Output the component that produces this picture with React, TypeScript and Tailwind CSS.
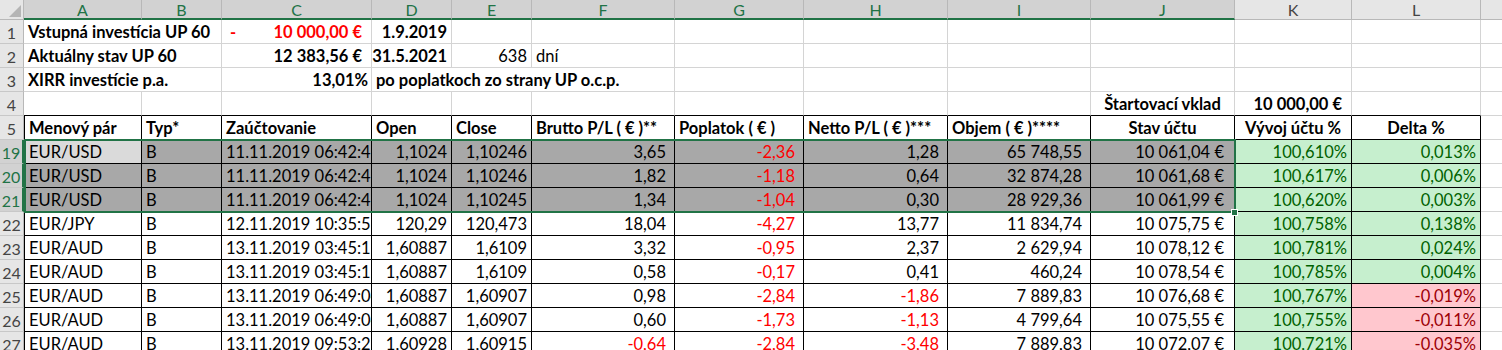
import React from 'react';

type Cell = {
  v?: React.ReactNode;
  a?: 'l' | 'r' | 'c';
  b?: boolean;
  c?: string;
  bg?: string;
  span?: number;
  pr?: string;
};

type Row = { n: number; kind: 'top' | 'r4' | 'table'; sel?: boolean; cells: Cell[] };

const COL_LETTERS = ['', 'A', 'B', 'C', 'D', 'E', 'F', 'G', 'H', 'I', 'J', 'K', 'L', ''];

const SPAN: Record<number, string> = { 1: '', 2: 'col-span-2', 3: 'col-span-3' };

const empty = (k: number): Cell[] => Array.from({ length: k }, () => ({}));

const RED = 'text-[#ff0000]';

const tableData: string[][] = [
  ['EUR/USD', 'B', '11.11.2019 06:42:46', '1,1024', '1,10246', '3,65', '-2,36', '1,28', '65 748,55', '10 061,04 €', '100,610%', '0,013%'],
  ['EUR/USD', 'B', '11.11.2019 06:42:46', '1,1024', '1,10246', '1,82', '-1,18', '0,64', '32 874,28', '10 061,68 €', '100,617%', '0,006%'],
  ['EUR/USD', 'B', '11.11.2019 06:42:46', '1,1024', '1,10245', '1,34', '-1,04', '0,30', '28 929,36', '10 061,99 €', '100,620%', '0,003%'],
  ['EUR/JPY', 'B', '12.11.2019 10:35:57', '120,29', '120,473', '18,04', '-4,27', '13,77', '11 834,74', '10 075,75 €', '100,758%', '0,138%'],
  ['EUR/AUD', 'B', '13.11.2019 03:45:16', '1,60887', '1,6109', '3,32', '-0,95', '2,37', '2 629,94', '10 078,12 €', '100,781%', '0,024%'],
  ['EUR/AUD', 'B', '13.11.2019 03:45:16', '1,60887', '1,6109', '0,58', '-0,17', '0,41', '460,24', '10 078,54 €', '100,785%', '0,004%'],
  ['EUR/AUD', 'B', '13.11.2019 06:49:04', '1,60887', '1,60907', '0,98', '-2,84', '-1,86', '7 889,83', '10 076,68 €', '100,767%', '-0,019%'],
  ['EUR/AUD', 'B', '13.11.2019 06:49:04', '1,60887', '1,60907', '0,60', '-1,73', '-1,13', '4 799,64', '10 075,55 €', '100,755%', '-0,011%'],
  ['EUR/AUD', 'B', '13.11.2019 09:53:23', '1,60928', '1,60915', '-0,64', '-2,84', '-3,48', '7 889,83', '10 072,07 €', '100,721%', '-0,035%'],
];

const PR = ['', '', '', 'pr-1', 'pr-1', 'pr-2', 'pr-2', 'pr-2', 'pr-2', 'pr-[10px]', 'pr-1', 'pr-1'];

const dataRow = (vals: string[], idx: number): Cell[] => {
  const sel = idx < 3;
  const cells: Cell[] = vals.map((v, i) => {
    const neg = v.startsWith('-');
    const cell: Cell = { v, a: i < 3 ? 'l' : 'r', pr: PR[i] };
    if (i >= 5 && i <= 7 && neg) cell.c = RED;
    if (sel && i <= 9) cell.bg = idx === 0 && i === 0 ? 'bg-[#dadada]' : 'bg-[#a8a8a8]';
    if (i === 10) {
      cell.bg = 'bg-[#c6efce]';
      cell.c = 'text-[#006100]';
    }
    if (i === 11) {
      cell.bg = neg ? 'bg-[#ffc7ce]' : 'bg-[#c6efce]';
      cell.c = neg ? 'text-[#9c0006]' : 'text-[#006100]';
    }
    return cell;
  });
  return [...cells, {}];
};

const rows: Row[] = [
  {
    n: 1,
    kind: 'top',
    cells: [
      { v: 'Vstupná investícia UP 60', b: true, span: 2 },
      {
        v: (
          <span className="flex w-full justify-between pl-1 pr-[9px]">
            <span>-</span>
            <span>10 000,00 €</span>
          </span>
        ),
        b: true,
        c: RED,
      },
      { v: '1.9.2019', a: 'r', b: true, pr: 'pr-1' },
      ...empty(9),
    ],
  },
  {
    n: 2,
    kind: 'top',
    cells: [
      { v: 'Aktuálny stav UP 60', b: true, span: 2 },
      { v: '12 383,56 €', a: 'r', b: true, pr: 'pr-[9px]' },
      { v: '31.5.2021', a: 'r', b: true, pr: 'pr-1' },
      { v: '638', a: 'r', pr: 'pr-1' },
      { v: 'dní' },
      ...empty(7),
    ],
  },
  {
    n: 3,
    kind: 'top',
    cells: [
      { v: 'XIRR investície p.a.', b: true, span: 2 },
      { v: '13,01%', a: 'r', b: true, pr: 'pr-[3px]' },
      { v: 'po poplatkoch zo strany UP o.c.p.', b: true, span: 3 },
      ...empty(7),
    ],
  },
  {
    n: 4,
    kind: 'r4',
    cells: [
      ...empty(9),
      { v: 'Štartovací vklad', a: 'c', b: true },
      { v: '10 000,00 €', a: 'r', b: true, pr: 'pr-[9px]' },
      {},
      {},
    ],
  },
  {
    n: 5,
    kind: 'table',
    cells: [
      { v: 'Menový pár', b: true },
      { v: 'Typ*', b: true },
      { v: 'Zaúčtovanie', b: true },
      { v: 'Open', b: true },
      { v: 'Close', b: true },
      { v: 'Brutto P/L ( € )**', b: true },
      { v: 'Poplatok ( € )', b: true },
      { v: 'Netto P/L ( € )***', b: true },
      { v: 'Objem ( € )****', b: true },
      { v: 'Stav účtu', b: true, a: 'c' },
      { v: 'Vývoj účtu %', b: true, a: 'c' },
      { v: 'Delta %', b: true, a: 'c' },
      {},
    ],
  },
  ...tableData.map((vals, i) => ({
    n: 19 + i,
    kind: 'table' as const,
    sel: i < 3,
    cells: dataRow(vals, i),
  })),
];

const SheetCell: React.FC<{ cell: Cell; col: number; kind: Row['kind'] }> = ({ cell, col, kind }) => {
  const span = cell.span ?? 1;
  const last = col + span - 1;
  const inTable = kind === 'table' && last <= 12;
  const right = last >= 13 ? 'border-r-0' : inTable ? 'border-r border-r-black' : 'border-r border-r-[#d4d4d4]';
  const bottom =
    (kind === 'table' || kind === 'r4') && last <= 12 ? 'border-b border-b-black' : 'border-b border-b-[#d4d4d4]';
  const left = kind === 'table' && col === 1 ? 'border-l border-l-black' : '';
  const align = cell.a === 'r' ? 'justify-end' : cell.a === 'c' ? 'justify-center' : 'justify-start pl-1';
  return (
    <div
      className={`flex h-[24px] items-center overflow-hidden whitespace-nowrap pt-[2px] ${SPAN[span]} ${right} ${bottom} ${left} ${align} ${
        cell.pr ?? ''
      } ${cell.bg ?? 'bg-white'} ${cell.b ? 'font-bold' : ''} ${cell.c ?? 'text-black'}`}
    >
      {cell.v}
    </div>
  );
};

const App: React.FC = () => {
  return (
    <div className="relative h-[350px] w-[1502px] overflow-hidden bg-white font-['Lato',sans-serif] text-[16.5px] leading-none">
      <div className="grid grid-cols-[24px_118px_80px_150px_80px_80px_143px_129px_144px_143px_144px_117px_129px_21px]">
        {/* column headers */}
        {COL_LETTERS.map((l, i) => {
          const hi = i >= 1 && i <= 10;
          if (i === 0)
            return (
              <div key="corner" className="relative h-[20px] border-r border-b border-r-[#b8b8b8] border-b-[#b8b8b8] bg-[#e6e6e6]">
                <svg className="absolute right-[2px] bottom-[2px]" width="12" height="12" viewBox="0 0 12 12">
                  <polygon points="12,0 12,12 0,12" fill="#b5b5b5" />
                </svg>
              </div>
            );
          return (
            <div
              key={`h${i}`}
              className={`flex h-[20px] items-center justify-center pt-px text-[16px] ${
                i === 13 ? '' : 'border-r border-r-[#b8b8b8]'
              } ${
                hi
                  ? 'border-b-2 border-b-[#217346] bg-[#d2d2d2] text-[#217346]'
                  : 'border-b border-b-[#b8b8b8] bg-[#e6e6e6] text-[#444444]'
              }`}
            >
              {l}
            </div>
          );
        })}

        {rows.map((row) => {
          let col = 1;
          return (
            <React.Fragment key={row.n}>
              <div
                className={`flex h-[24px] items-center justify-center border-b border-b-[#c8c8c8] pt-[2px] text-[16px] ${
                  row.sel
                    ? 'border-r-2 border-r-[#217346] bg-[#d2d2d2] text-[#217346]'
                    : 'border-r border-r-[#b8b8b8] bg-[#e6e6e6] text-[#444444]'
                }`}
              >
                {row.n}
              </div>
              {row.cells.map((cell, i) => {
                const c = col;
                col += cell.span ?? 1;
                return <SheetCell key={i} cell={cell} col={c} kind={row.kind} />;
              })}
            </React.Fragment>
          );
        })}
      </div>

      {/* selection A19:J21 */}
      <div className="pointer-events-none absolute top-[139px] left-[24px] h-[74px] w-[1212px] border-2 border-[#217346]" />
      <div className="pointer-events-none absolute top-[209px] left-[1231px] h-[7px] w-[7px] border border-white bg-[#217346]" />
    </div>
  );
};

export default App;
